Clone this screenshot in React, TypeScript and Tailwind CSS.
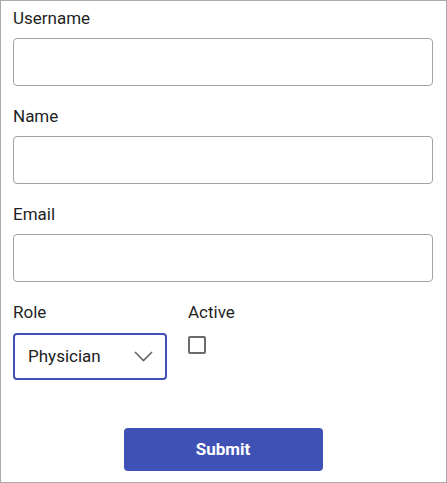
import { useState } from 'react';

function Field({ label }: { label: string }) {
  return (
    <div className="mb-[18px]">
      <label className="block text-[17px] leading-6 text-[#1f1f1f]">{label}</label>
      <input
        type="text"
        className="mt-2 block h-12 w-full rounded-[4px] border border-[#a3a3a3] bg-white px-3 text-[17px] outline-none"
      />
    </div>
  );
}

export default function App() {
  const [active, setActive] = useState(false);

  return (
    <div
      className="h-[483px] w-[447px] border border-[#a9a9a9] bg-white pl-3 pr-[13px] pt-[5px]"
      style={{ fontFamily: 'Roboto, "Liberation Sans", sans-serif' }}
    >
      <Field label="Username" />
      <Field label="Name" />
      <Field label="Email" />

      {/* Role + Active row */}
      <div className="flex gap-[21px]">
        <div className="w-[154px]">
          <label className="block text-[17px] leading-6 text-[#1f1f1f]">Role</label>
          <div className="mt-[9px] flex h-[47px] items-center justify-between rounded-[4px] border-2 border-[#3f51b5] bg-white pl-[13px] pr-[12px]">
            <span className="text-[17px] text-[#212121]">Physician</span>
            <svg width="19" height="11" viewBox="0 0 19 11" fill="none">
              <path d="M1 1l8.5 8.5L18 1" stroke="#666" strokeWidth="1.6" />
            </svg>
          </div>
        </div>
        <div>
          <label className="block text-[17px] leading-6 text-[#1f1f1f]">Active</label>
          <button
            onClick={() => setActive(!active)}
            className="mt-3 block h-[18px] w-[18px] rounded-[2px] border-2 border-[#6b6b6b] bg-white"
          />
        </div>
      </div>

      <div className="mt-12 flex justify-center">
        <button className="h-[43px] w-[199px] rounded-[4px] bg-[#3f51b5] text-[17px] font-bold text-white">
          Submit
        </button>
      </div>
    </div>
  );
}
